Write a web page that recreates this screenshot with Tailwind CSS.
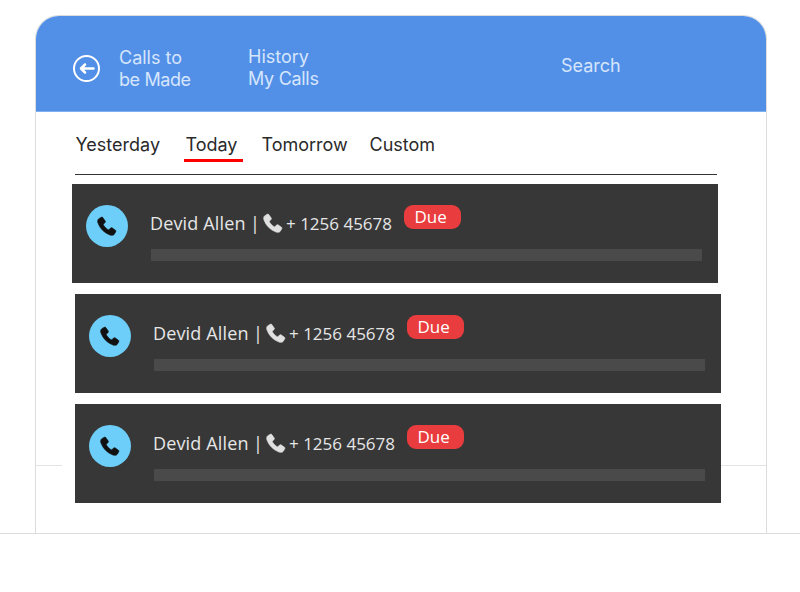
<!doctype html>
<html>
<head>
<meta charset="utf-8">
<script src="https://cdn.jsdelivr.net/npm/@tailwindcss/browser@4"></script>
</head>
<body class="bg-white">
<div class="w-[800px] h-[592px] overflow-hidden bg-white font-['Inter',sans-serif]">
  <div class="h-[534px] pt-[15px] border-b border-[#dcdcdc]">
    <div class="relative ml-[35px] w-[732px] h-[518px] border-x border-t border-[#dcdcdc] rounded-t-[24px]">
      <header class="flex h-[96px] rounded-t-[23px] bg-[#5290e8] border-b border-[#7fb0ee] text-[#d6e5fb] text-[18px] leading-[22px]">
        <svg class="ml-[36px] mt-[38px]" width="29" height="29" viewBox="0 0 29 29" fill="none" stroke="#fff" stroke-width="2"><circle cx="14.5" cy="14.5" r="12.500"/><path d="M21.500 14.500H9M13 10.500l-4 4 4 4" stroke-width="2.500" stroke-linecap="round" stroke-linejoin="round"/></svg>
        <div class="ml-[18px] mt-[31px] w-[129px]">Calls to<br><span class="tracking-[-0.4px]">be Made</span></div>
        <div class="mt-[30px] w-[313px]">History<br><span class="tracking-[-0.3px]">My Calls</span></div>
        <div class="mt-[39px]">Search</div>
      </header>
      <nav class="flex ml-[39px] mr-[49px] h-[63px] border-b border-[#333] text-[18px] text-[#2a2a2a]">
        <span class="pt-[22px] leading-[22px] ml-[0.500px] w-[110px]">Yesterday</span>
        <span class="relative pt-[22px] leading-[22px] w-[76px]">Today<span class="absolute left-[-2px] top-[47px] w-[59px] h-[3px] bg-[#f00]"></span></span>
        <span class="pt-[22px] leading-[22px] w-[108px]">Tomorrow</span>
        <span class="pt-[22px] leading-[22px]">Custom</span>
      </nav>
      <div class="absolute top-[449px] left-0 right-0 flex justify-between">
        <span class="w-[26px] h-[1px] bg-[#e4e4e4]"></span>
        <span class="w-[45px] h-[1px] bg-[#e4e4e4]"></span>
      </div>
      <div class="relative flex flex-col gap-[11px] mt-[9px] ml-[39px] w-[646px] font-['Open_Sans',sans-serif]">
        <article class="-ml-[3px] flex h-[99px] w-[646px] bg-[#373737]">
          <div class="ml-[14px] mt-[21px] flex h-[42px] w-[42px] items-center justify-center rounded-full bg-[#6dcff9]">
            <svg class="-ml-[1px]" width="23" height="23" viewBox="0 0 24 24" fill="#111" stroke="#111" stroke-width="0.6"><path d="M6.600 2.300 4 3.800C2.600 4.800 2.500 6.700 3.100 8.400c2.200 5.900 6.600 10.300 12.500 12.500 1.700.6 3.600.5 4.600-.9l1.500-2.600c.3-.5.2-1.100-.3-1.500l-3.600-2.500c-.5-.3-1.100-.3-1.500.1l-1.600 1.700c-.3.300-.7.300-1.100.1-2-1.200-3.600-2.800-4.800-4.800-.2-.4-.2-.8.100-1.100l1.700-1.600c.4-.4.4-1 .1-1.500L8.100 2.600c-.4-.5-1-.6-1.500-.3z"/></svg>
          </div>
          <div class="ml-[22px] w-[552px]">
            <div class="flex h-[65px] text-[#e6e6e6] text-[17px] leading-[24px]">
              <span class="mt-[27px] w-[100px] whitespace-nowrap text-[18px] tracking-[0.15px]">Devid Allen</span>
              <span class="mt-[27px] w-[11px] text-[18px]">|</span>
              <svg class="mt-[28px]" width="23" height="23" viewBox="0 0 24 24" fill="#e0e0e0" stroke="#e0e0e0" stroke-width="0.6"><path d="M6.600 2.300 4 3.800C2.600 4.800 2.500 6.700 3.100 8.400c2.200 5.900 6.600 10.300 12.500 12.500 1.700.6 3.600.5 4.600-.9l1.500-2.600c.3-.5.2-1.100-.3-1.500l-3.600-2.500c-.5-.3-1.100-.3-1.500.1l-1.600 1.700c-.3.300-.7.300-1.100.1-2-1.200-3.600-2.800-4.800-4.800-.2-.4-.2-.8.100-1.100l1.700-1.600c.4-.4.4-1 .1-1.500L8.100 2.600c-.4-.5-1-.6-1.500-.3z"/></svg>
              <span class="mt-[28px] ml-[2px]">+ 1256 45678</span>
              <span class="ml-[12px] mt-[21px] h-[24px] w-[57px] pr-[4px] rounded-[9px] bg-[#e93c3e] text-center text-white text-[17px] leading-[24px]">Due</span>
            </div>
            <div class="ml-px h-[12px] w-[551px] bg-[#4a4a4a]"></div>
          </div>
        </article>
        <article class="flex h-[99px] w-[646px] bg-[#373737]">
          <div class="ml-[14px] mt-[21px] flex h-[42px] w-[42px] items-center justify-center rounded-full bg-[#6dcff9]">
            <svg class="-ml-[1px]" width="23" height="23" viewBox="0 0 24 24" fill="#111" stroke="#111" stroke-width="0.6"><path d="M6.600 2.300 4 3.800C2.600 4.800 2.500 6.700 3.100 8.400c2.200 5.900 6.600 10.300 12.500 12.500 1.700.6 3.600.5 4.600-.9l1.500-2.600c.3-.5.2-1.100-.3-1.500l-3.600-2.500c-.5-.3-1.100-.3-1.500.1l-1.600 1.700c-.3.300-.7.300-1.100.1-2-1.200-3.600-2.800-4.800-4.800-.2-.4-.2-.8.100-1.100l1.700-1.600c.4-.4.4-1 .1-1.500L8.100 2.600c-.4-.5-1-.6-1.500-.3z"/></svg>
          </div>
          <div class="ml-[22px] w-[552px]">
            <div class="flex h-[65px] text-[#e6e6e6] text-[17px] leading-[24px]">
              <span class="mt-[27px] w-[100px] whitespace-nowrap text-[18px] tracking-[0.15px]">Devid Allen</span>
              <span class="mt-[27px] w-[11px] text-[18px]">|</span>
              <svg class="mt-[28px]" width="23" height="23" viewBox="0 0 24 24" fill="#e0e0e0" stroke="#e0e0e0" stroke-width="0.6"><path d="M6.600 2.300 4 3.800C2.600 4.800 2.500 6.700 3.100 8.400c2.200 5.900 6.600 10.300 12.500 12.500 1.700.6 3.600.5 4.600-.9l1.500-2.600c.3-.5.2-1.100-.3-1.500l-3.600-2.500c-.5-.3-1.100-.3-1.500.1l-1.600 1.700c-.3.300-.7.300-1.100.1-2-1.200-3.600-2.800-4.800-4.800-.2-.4-.2-.8.100-1.100l1.700-1.600c.4-.4.4-1 .1-1.500L8.100 2.600c-.4-.5-1-.6-1.500-.3z"/></svg>
              <span class="mt-[28px] ml-[2px]">+ 1256 45678</span>
              <span class="ml-[12px] mt-[21px] h-[24px] w-[57px] pr-[4px] rounded-[9px] bg-[#e93c3e] text-center text-white text-[17px] leading-[24px]">Due</span>
            </div>
            <div class="ml-px h-[12px] w-[551px] bg-[#4a4a4a]"></div>
          </div>
        </article>
        <article class="flex h-[99px] w-[646px] bg-[#373737]">
          <div class="ml-[14px] mt-[21px] flex h-[42px] w-[42px] items-center justify-center rounded-full bg-[#6dcff9]">
            <svg class="-ml-[1px]" width="23" height="23" viewBox="0 0 24 24" fill="#111" stroke="#111" stroke-width="0.6"><path d="M6.600 2.300 4 3.800C2.600 4.800 2.500 6.700 3.100 8.400c2.200 5.900 6.600 10.300 12.500 12.500 1.700.6 3.600.5 4.600-.9l1.500-2.600c.3-.5.2-1.100-.3-1.500l-3.600-2.500c-.5-.3-1.100-.3-1.500.1l-1.600 1.700c-.3.300-.7.300-1.100.1-2-1.200-3.600-2.800-4.800-4.800-.2-.4-.2-.8.100-1.100l1.700-1.600c.4-.4.4-1 .1-1.500L8.100 2.600c-.4-.5-1-.6-1.500-.3z"/></svg>
          </div>
          <div class="ml-[22px] w-[552px]">
            <div class="flex h-[65px] text-[#e6e6e6] text-[17px] leading-[24px]">
              <span class="mt-[27px] w-[100px] whitespace-nowrap text-[18px] tracking-[0.15px]">Devid Allen</span>
              <span class="mt-[27px] w-[11px] text-[18px]">|</span>
              <svg class="mt-[28px]" width="23" height="23" viewBox="0 0 24 24" fill="#e0e0e0" stroke="#e0e0e0" stroke-width="0.6"><path d="M6.600 2.300 4 3.800C2.600 4.800 2.500 6.700 3.100 8.400c2.200 5.900 6.600 10.300 12.500 12.500 1.700.6 3.600.5 4.600-.9l1.500-2.600c.3-.5.2-1.100-.3-1.500l-3.600-2.500c-.5-.3-1.100-.3-1.500.1l-1.600 1.700c-.3.300-.7.300-1.100.1-2-1.200-3.600-2.800-4.800-4.800-.2-.4-.2-.8.100-1.100l1.700-1.600c.4-.4.4-1 .1-1.500L8.100 2.600c-.4-.5-1-.6-1.500-.3z"/></svg>
              <span class="mt-[28px] ml-[2px]">+ 1256 45678</span>
              <span class="ml-[12px] mt-[21px] h-[24px] w-[57px] pr-[4px] rounded-[9px] bg-[#e93c3e] text-center text-white text-[17px] leading-[24px]">Due</span>
            </div>
            <div class="ml-px h-[12px] w-[551px] bg-[#4a4a4a]"></div>
          </div>
        </article>
      </div>
    </div>
  </div>
</div>
</body>
</html>
